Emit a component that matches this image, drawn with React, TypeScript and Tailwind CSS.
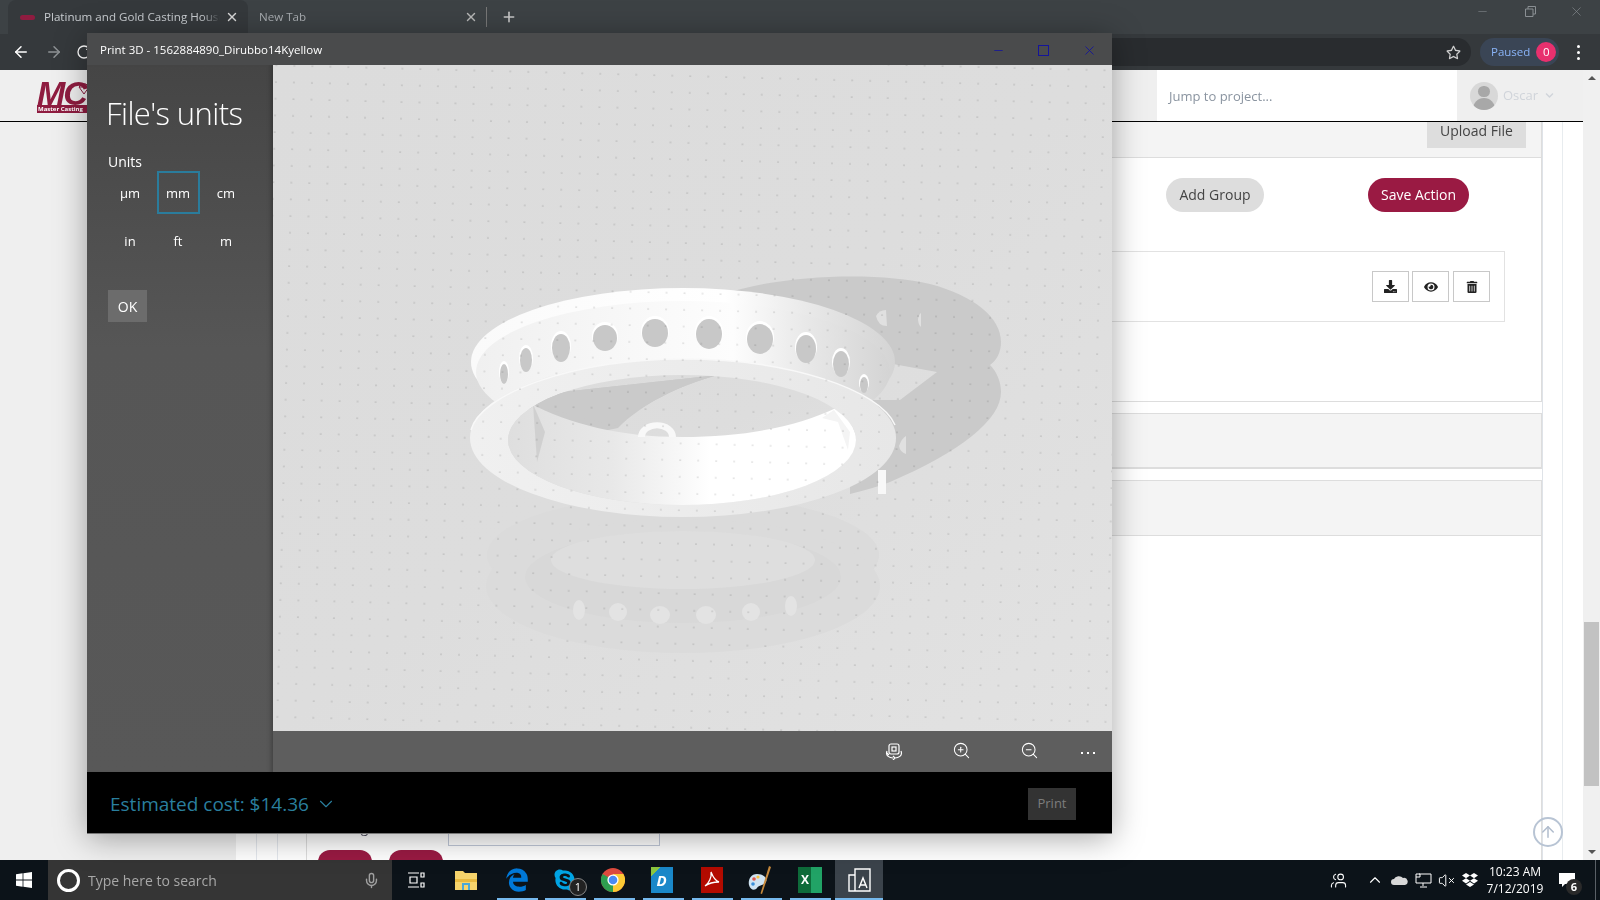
import { FaDownload, FaEye, FaTrashAlt, FaRegStar, FaSkype, FaChevronDown } from "react-icons/fa";
import { FaEdgeLegacy } from "react-icons/fa6";
import { X, Plus, ArrowLeft, ArrowRight, RotateCw, ChevronDown, ZoomIn, ZoomOut, ArrowUp, Mic, ChevronUp, VolumeX, Users, Minus } from "lucide-react";

const units = ["µm", "mm", "cm", "in", "ft", "m"];

const holes = [
  [504, 373, 4, 10],
  [526, 359, 6, 12],
  [561, 347, 9, 14],
  [605, 337, 12, 13],
  [655, 332, 13, 14],
  [709, 333, 13, 15],
  [760, 338, 13, 15],
  [806, 348, 10, 14],
  [841, 363, 8, 13],
  [864, 384, 4, 8],
];

const reflectionHoles = [
  [579, 610, 6, 10],
  [618, 612, 9, 9],
  [660, 615, 10, 9],
  [706, 615, 10, 9],
  [751, 612, 9, 9],
  [791, 606, 6, 10],
];

const trayIcons = [497, 545, 594, 643, 692, 741, 790];

const RingScene = () => (
  <svg viewBox="273 65 839 666" className="block w-[839px] h-[666px]">
    <defs>
      <pattern id="dots" width="18" height="16.7" patternUnits="userSpaceOnUse" patternTransform="rotate(1.5)">
        <circle cx="8" cy="8" r="0.8" fill="#bdbdbd" />
      </pattern>
      <linearGradient id="floor" x1="0" y1="0" x2="1" y2="1">
        <stop offset="0" stopColor="#dcdcdc" />
        <stop offset="0.5" stopColor="#dddddd" />
        <stop offset="1" stopColor="#e2e2e2" />
      </linearGradient>
      <linearGradient id="band" x1="0" y1="0" x2="1" y2="0">
        <stop offset="0" stopColor="#fafafa" />
        <stop offset="0.6" stopColor="#ffffff" />
        <stop offset="0.82" stopColor="#e6e6e6" />
        <stop offset="1" stopColor="#d4d4d4" />
      </linearGradient>
      <linearGradient id="inner" x1="0" y1="0" x2="1" y2="0">
        <stop offset="0" stopColor="#f0f0f0" />
        <stop offset="0.62" stopColor="#fdfdfd" />
        <stop offset="0.8" stopColor="#e8e8e8" />
        <stop offset="1" stopColor="#d4d4d4" />
      </linearGradient>
      <linearGradient id="face" x1="0" y1="0" x2="1" y2="0">
        <stop offset="0" stopColor="#f0f0f0" />
        <stop offset="0.5" stopColor="#ececec" />
        <stop offset="1" stopColor="#e7e7e7" />
      </linearGradient>
      <linearGradient id="wall" x1="0" y1="0" x2="1" y2="0">
        <stop offset="0" stopColor="#dedede" />
        <stop offset="0.3" stopColor="#e8e8e8" />
        <stop offset="0.5" stopColor="#f8f8f8" />
        <stop offset="0.58" stopColor="#ffffff" />
        <stop offset="1" stopColor="#ffffff" />
      </linearGradient>
      <clipPath id="hole">
        <ellipse cx="682" cy="440" rx="174" ry="65" />
      </clipPath>
    </defs>

    <rect x="273" y="65" width="839" height="666" fill="url(#floor)" />

    {/* reflection */}
    <ellipse cx="683" cy="555" rx="196" ry="60" fill="#dbdbdb" />
    <ellipse cx="683" cy="586" rx="197" ry="67" fill="#dbdbdb" />
    <ellipse cx="683" cy="577" rx="158" ry="46" fill="#d8d8d8" />
    <ellipse cx="683" cy="560" rx="132" ry="29" fill="#dedede" />
    {reflectionHoles.map(([x, y, rx, ry]) => (
      <ellipse key={x} cx={x} cy={y} rx={rx} ry={ry} fill="#e3e3e3" />
    ))}

    {/* cast shadow */}
    <path
      d="M730 292 C790 274 880 272 930 284 C975 296 1001 318 1001 342 C1001 352 997 360 990 365 C997 372 1001 382 1001 392 C1001 420 960 452 890 482 C880 486 866 490 850 494 L850 400 L900 400 L937 372 L860 358 Z"
      fill="#cacaca"
    />
    <path d="M876 316 q3 -6 10 -6 l1 16 q-9 0 -11 -10z" fill="#e0e0e0" />
    <path d="M918 319 q1 -5 3 -6 l0 14 q-3 -3 -3 -8z" fill="#e0e0e0" />
    <path d="M899 446 q3 -8 7 -10 l0 18 q-6 -2 -7 -8z" fill="#e0e0e0" />
    <rect x="878" y="470" width="8" height="24" fill="#f8f8f8" />

    {/* top band */}
    <ellipse cx="683" cy="362" rx="212" ry="74" fill="url(#band)" />
    <ellipse cx="683" cy="372" rx="207" ry="71" fill="url(#inner)" />
    {holes.map(([x, y, rx, ry]) => (
      <g key={x}>
        <ellipse cx={x} cy={y - 1} rx={rx + 1} ry={ry + 1} fill="#ffffff" />
        <ellipse cx={x} cy={y + 1} rx={rx} ry={ry} fill="#c8c8c8" />
      </g>
    ))}

    {/* front face */}
    <ellipse cx="683" cy="438" rx="213" ry="79" fill="url(#face)" />
    <path d="M471 430 C480 395 570 359 683 359 C790 359 880 390 895 425" fill="none" stroke="#f8f8f8" strokeWidth="1.5" />
    <ellipse cx="682" cy="440" rx="174" ry="65" fill="url(#floor)" />
    <g clipPath="url(#hole)">
      <path d="M529 403 L553 393 L718 375 C680 385 640 405 618 428 L560 440 L530 450 Z" fill="#cacaca" />
      <path
        d="M505 440 C510 420 520 408 529 403 C570 424 620 437 682 437 C750 437 800 425 836 408 C848 415 856 430 858 445 C858 480 780 510 682 510 C590 510 505 480 505 440 Z"
        fill="url(#wall)"
      />
      <path d="M529 403 L553 393 L718 375 C680 385 640 405 618 426 C585 418 555 412 529 403 Z" fill="#cacaca" />
      <path d="M533 404 L545 432 L537 462 Z" fill="#d0d0d0" />
      <path d="M638 437 a18 14 0 0 1 38 0 l-7 0 a11 8 0 0 0 -24 0 z" fill="#f8f8f8" />
      <path d="M822 418 L834 410 L850 432 L848 450 L838 422 Z" fill="#f4f4f4" />
    </g>

    <rect x="273" y="65" width="839" height="666" fill="url(#dots)" opacity="0.6" style={{ mixBlendMode: "multiply" }} />
  </svg>
);

const Cube3D = () => (
  <svg width="18" height="18" viewBox="0 0 18 18" fill="none" stroke="#fff" strokeWidth="1.2">
    <rect x="4" y="2" width="10" height="10" rx="2" />
    <rect x="7" y="5" width="4" height="4" />
    <path d="M2 9 C0 14 5 16 8 16 M16 9 C18 14 13 16 10 16 M8 14 l2 2 -2 2 M4 13 l-2 -2" />
  </svg>
);

const Taskbar = () => (
  <div className="flex items-center h-10 bg-[#0c1319] shrink-0 relative text-white">
    <div className="w-12 flex justify-center">
      <svg width="16" height="16" viewBox="0 0 16 16" fill="#fff">
        <path d="M0 2.3 L6.6 1.3 V7.6 H0Z M7.4 1.2 L16 0 V7.6 H7.4Z M0 8.4 H6.6 V14.7 L0 13.7Z M7.4 8.4 H16 V16 L7.4 14.8Z" />
      </svg>
    </div>
    <div className="flex items-center w-[344px] h-10 bg-[#353535] text-[#a8a8a8] text-[14px]">
      <span className="ml-[9px] w-[23px] h-[23px] rounded-full border-[3px] border-white" />
      <span className="ml-[8px] flex-1">Type here to search</span>
      <Mic size={17} className="mr-[12px] text-[#a0a0a0]" />
    </div>
    <div className="w-12 flex justify-center">
      <svg width="18" height="16" viewBox="0 0 18 16" fill="none" stroke="#fff" strokeWidth="1.2">
        <path d="M1 1 H12 M1 15 H12 M3 5 H10 V11 H3Z M14 1 H17 V5 H14Z M14 11 H17 V15 H14Z" />
      </svg>
    </div>
    <div className="ml-[1px] w-[50px] flex justify-center">
      <svg width="22" height="20" viewBox="0 0 22 20">
        <path d="M0 1 H8 L10 3 H22 V20 H0Z" fill="#f6d36b" />
        <rect x="0" y="9" width="22" height="3" fill="#e8b93f" />
        <path d="M7 20 V13 H15 V20 H13 V15 H9 V20Z" fill="#4aa8d8" />
      </svg>
    </div>
    <div className="w-[51px] flex justify-center text-[#0078d7]">
      <FaEdgeLegacy size={24} />
    </div>
    <div className="w-[45px] flex justify-center text-[#00a4e4] relative">
      <FaSkype size={24} />
      <span className="absolute left-[27px] top-[10px] w-[18px] h-[18px] rounded-full bg-[#222] border border-[#888] text-[11px] leading-[16px] text-center text-white">1</span>
    </div>
    <div className="w-[51px] flex justify-center">
      <svg width="24" height="24" viewBox="0 0 24 24">
        <circle cx="12" cy="12" r="12" fill="#dd4b3e" />
        <path d="M12 12 L1.6 6 A12 12 0 0 0 12 24 Z" fill="#2e9e4f" />
        <path d="M12 12 L12 24 A12 12 0 0 0 22.4 6 L12 6Z" fill="#fcc934" />
        <circle cx="12" cy="12" r="5.6" fill="#fff" />
        <circle cx="12" cy="12" r="4.3" fill="#4a8af4" />
      </svg>
    </div>
    <div className="w-[47px] flex justify-center">
      <div className="w-[22px] h-[26px] bg-[linear-gradient(135deg,#8cc63f_20%,#1a88c9_20%)] flex items-center justify-center text-white text-[15px] font-bold italic">D</div>
    </div>
    <div className="w-[53px] flex justify-center">
      <svg width="22" height="26" viewBox="0 0 22 26">
        <rect width="22" height="26" fill="#b30b00" />
        <path d="M4 19 C8 16 11 10 10 5 C12 10 14 14 18 15 C13 15 8 16 4 19Z" fill="none" stroke="#fff" strokeWidth="1.3" />
      </svg>
    </div>
    <div className="w-[43px] flex justify-center">
      <svg width="26" height="30" viewBox="0 0 26 30">
        <path d="M10 9 C3 9 1 16 2 20 C3 25 8 26 10 23 C12 20 14 21 17 19 C22 16 19 9 10 9Z" fill="#cfe3f2" />
        <circle cx="7" cy="14" r="1.8" fill="#e2574c" />
        <circle cx="6" cy="19" r="1.8" fill="#3a8fd9" />
        <circle cx="11" cy="12" r="1.6" fill="#f6c544" />
        <path d="M22 1 L24 2 L15 29 L13.5 28.5 Z" fill="#c98a3c" />
      </svg>
    </div>
    <div className="w-[54px] flex justify-center pl-[4px]">
      <div className="w-[24px] h-[26px] bg-[linear-gradient(90deg,#0e6b3a_55%,#21a366_55%)] text-white text-[12px] font-bold flex items-center pl-[3px]">X</div>
    </div>
    <div className="w-12 h-10 bg-[#3b434b] flex justify-center items-center">
      <svg width="24" height="26" viewBox="0 0 24 26" fill="none" stroke="#fff" strokeWidth="1.4">
        <path d="M8 8 V2 H23 V24 H2 V8 H8 V24" />
        <path d="M12 21 L16 11 L20 21 M13.5 18 H18.5" />
      </svg>
    </div>

    {trayIcons.map((x) => (
      <span key={x} style={{ left: x }} className="absolute bottom-0 w-[41px] h-[2px] bg-[#76b9ed]" />
    ))}
    <span className="absolute bottom-0 left-[835px] w-12 h-[2px] bg-[#76b9ed]" />

    <div className="flex items-center ml-auto">
      <Users size={17} strokeWidth={1.5} className="mr-[19px] -scale-x-100" />
      <ChevronUp size={18} strokeWidth={1.5} className="mr-[7px]" />
      <svg width="17" height="10" viewBox="0 0 17 10" fill="#d8d8d8" className="mr-[7px]">
        <path d="M3 10 A3 3 0 0 1 3 4 A5 4 0 0 1 12 3 A3.5 3.5 0 0 1 14 10Z" />
      </svg>
      <svg width="17" height="15" viewBox="0 0 17 15" fill="none" stroke="#fff" className="mr-[6px]">
        <path d="M4 1 H16 V10 H1 V4 M8 10 V13 M5 14 H12 M1 1 H5 V4 H1Z" />
      </svg>
      <VolumeX size={17} strokeWidth={1.4} className="mr-[7px]" />
      <svg width="16" height="15" viewBox="0 0 16 15" fill="#fff" className="mr-[4px]">
        <path d="M4 0 L8 2.6 L4 5.2 L0 2.6Z M12 0 L16 2.6 L12 5.2 L8 2.6Z M4 5.2 L8 7.8 L4 10.4 L0 7.8Z M12 5.2 L16 7.8 L12 10.4 L8 7.8Z M4 11.4 L8 9 L12 11.4 L8 14Z" />
      </svg>
      <div className="w-[66px] text-center text-[12px] leading-[17px] whitespace-nowrap">
        <div>10:23 AM</div>
        <div>7/12/2019</div>
      </div>
      <div className="relative ml-[11px] mr-[25px]">
        <svg width="16" height="15" viewBox="0 0 16 15" fill="#fff">
          <path d="M0 0 H16 V11 H6 L3 14 V11 H0Z" />
        </svg>
        <span className="absolute left-[7px] top-[6px] w-[16px] h-[16px] rounded-full bg-[#2a2a2a] text-[11px] font-bold leading-[16px] text-center">6</span>
      </div>
      <span className="absolute right-[4px] top-0 h-10 w-px bg-[#5a6066]" />
    </div>
  </div>
);

const Window3D = () => (
  <div className="absolute left-[87px] top-[33px] w-[1025px] h-[801px] flex flex-col shadow-[0_4px_30px_rgba(0,0,0,0.35)] text-white border-b border-[#777]">
    <div className="flex items-center h-8 shrink-0 bg-[#4a4b4c] pl-[13px] pt-[2px] text-[11.5px]">
      <span className="flex-1">Print 3D - 1562884890_Dirubbo14Kyellow</span>
      <Minus size={13} strokeWidth={1.5} className="text-[#15159a] mr-[33px]" />
      <span className="w-[11px] h-[11px] border border-[#15159a] mr-[33px]" />
      <X size={15} strokeWidth={1.4} className="text-[#15159a] mr-[15px]" />
    </div>
    <div className="flex flex-1 min-h-0">
      <div className="w-[186px] shrink-0 bg-[linear-gradient(180deg,#454545,#565656_40%,#585858)] pl-[19px] pr-[5px] shadow-[inset_-5px_0_4px_-3px_rgba(0,0,0,0.25)]">
        <h1 className="mt-[28px] text-[31px] leading-[40px] font-light tracking-[-0.6px] whitespace-nowrap">File's units</h1>
        <div className="mt-[20px] pl-[2px] text-[14px] leading-[18px]">Units</div>
        <div className="mt-[-1px] grid grid-cols-[48px_48px_48px] auto-rows-[48px]">
          {units.map((u) => (
            <div key={u} className="flex items-center justify-center text-[13px]">
              <span className={u === "mm" ? "w-[43px] h-[43px] mb-[4px] pt-[4px] border-2 border-[#2a7c9c] flex items-center justify-center" : ""}>{u}</span>
            </div>
          ))}
        </div>
        <button className="mt-[24px] ml-[2px] w-[39px] h-[32px] bg-[#6c6c6c] text-[14px]">OK</button>
      </div>
      <div className="flex-1 flex flex-col min-w-0">
        <RingScene />
        <div className="flex items-center flex-1 bg-[#5e5e5e] pl-[612px] pb-[2px]">
          <Cube3D />
          <ZoomIn size={19} strokeWidth={1.3} className="ml-[49px]" />
          <ZoomOut size={19} strokeWidth={1.3} className="ml-[49px]" />
          <span className="ml-[42px] mt-[4px] flex gap-[4px]">
            <i className="w-[2px] h-[2px] bg-white" />
            <i className="w-[2px] h-[2px] bg-white" />
            <i className="w-[2px] h-[2px] bg-white" />
          </span>
        </div>
      </div>
    </div>
    <div className="flex items-center h-[61px] shrink-0 bg-black pl-[23px] pr-[36px] pt-[3px]">
      <span className="text-[19px] text-[#2a7f9e]">Estimated cost: $14.36</span>
      <ChevronDown size={22} strokeWidth={1.2} className="ml-[6px] text-[#2a7f9e]" />
      <button className="ml-auto w-[48px] h-[32px] bg-[#333333] text-[#7d7d7d] text-[13px]">Print</button>
    </div>
  </div>
);

const App = () => (
  <div className="relative w-[1600px] h-[900px] overflow-hidden flex flex-col bg-white font-['Open_Sans',sans-serif]">
    {/* browser tabs */}
    <div className="flex items-end h-[34px] bg-[#3d4245] shrink-0 text-[11.6px]">
      <div className="ml-[8px] w-[240px] h-[34px] rounded-t-lg bg-[#35393c] flex items-center pl-[12px] text-[#c8ccd0]">
        <span className="w-[15px] h-[5px] bg-[#8f1c40] rounded-sm" />
        <span className="ml-[9px] w-[176px] overflow-hidden whitespace-nowrap [mask-image:linear-gradient(90deg,#000_90%,transparent)]">Platinum and Gold Casting House</span>
        <X size={14} className="ml-[5px] text-[#d8d8d8]" strokeWidth={2.4} />
      </div>
      <div className="h-[34px] w-[238px] flex items-center pl-[11px] text-[#a8acb0]">
        <span className="flex-1">New Tab</span>
        <X size={14} className="mr-[8px] text-[#b8b8b8]" strokeWidth={2.4} />
      </div>
      <span className="h-[20px] w-px bg-[#777] mb-[7px]" />
      <Plus size={16} className="ml-[14px] mb-[9px] text-[#c8c8c8]" strokeWidth={2.4} />
      <div className="ml-auto flex items-center h-[34px] mb-[6px] text-[#8a8f93]">
        <Minus size={13} strokeWidth={1} className="mr-[36px]" />
        <svg width="11" height="11" viewBox="0 0 11 11" fill="none" stroke="#8a8f93" className="mr-[33px]">
          <path d="M0.5 3 H8 V10.5 H0.5Z M3 3 V0.5 H10.5 V8 H8" />
        </svg>
        <X size={15} strokeWidth={1} className="mr-[16px]" />
      </div>
    </div>
    {/* browser toolbar */}
    <div className="flex items-center h-[36px] bg-[#35393c] shrink-0">
      <ArrowLeft size={18} className="ml-[12px] text-white" />
      <ArrowRight size={18} className="ml-[15px] text-[#8e9295]" />
      <RotateCw size={16} className="ml-[13px] text-white" />
      <div className="ml-[6px] flex-1 h-[28px] rounded-full bg-[#292c2f] flex items-center justify-end pr-[10px]">
        <FaRegStar size={15} className="text-[#d0d0d0]" />
      </div>
      <div className="ml-[9px] w-[79px] h-[28px] rounded-full bg-[#3a4555] flex items-center pl-[11px] text-[11.5px] text-[#8ab4f8]">
        Paused
        <span className="ml-[6px] w-[20px] h-[20px] rounded-full bg-[#e8306e] text-white text-center leading-[20px]">0</span>
      </div>
      <span className="ml-[18px] mr-[20px] flex flex-col gap-[3px]">
        <i className="w-[3px] h-[3px] rounded-full bg-white" />
        <i className="w-[3px] h-[3px] rounded-full bg-white" />
        <i className="w-[3px] h-[3px] rounded-full bg-white" />
      </span>
    </div>

    {/* page behind the dialog */}
    <div className="flex flex-1 min-h-0">
      <div className="flex-1 flex flex-col min-w-0">
        <div className="flex h-[52px] shrink-0 bg-[#efefef] border-b border-black">
          <div className="ml-[37px] mt-[11px] w-[100px] h-[32px] relative">
            <div className="text-[#8f1c40] font-['Liberation_Sans',sans-serif] font-bold italic text-[34px] leading-[24px] tracking-[-2px]">MC</div>
            <svg width="12" height="12" viewBox="0 0 12 12" fill="none" stroke="#8f1c40" className="absolute left-[41px] top-[2px]">
              <path d="M1 4 L4 1 H8 L11 4 L6 11Z M1 4 H11" />
            </svg>
            <div className="w-[60px] bg-[#8f1c40] text-white text-[6px] leading-[8px] font-bold whitespace-nowrap pl-[1px]">Master Casting</div>
          </div>
          <div className="ml-[1020px] w-[300px] bg-white flex items-center pl-[12px] pt-[2px] text-[13px] text-[#8a94a0]">Jump to project...</div>
          <div className="flex-1 flex items-center text-[#d0d4da] text-[13px] pl-[13px]">
            <span className="w-[28px] h-[28px] rounded-full bg-[#d8d8d8] overflow-hidden flex flex-col items-center">
              <i className="mt-[4px] w-[12px] h-[12px] rounded-full bg-[#a8a8a8]" />
              <i className="mt-[1px] w-[22px] h-[12px] rounded-t-full bg-[#a8a8a8]" />
            </span>
            <span className="ml-[5px]">Oscar</span>
            <FaChevronDown size={9} className="ml-[7px]" />
          </div>
        </div>
        <div className="flex flex-1 min-h-0">
          <div className="w-[236px] shrink-0 bg-[#efefef]" />
          <div className="flex-1 flex min-w-0 relative bg-white">
            <div className="w-[21px] border-r border-[#e4e8ee]" />
            <div className="w-[21px] border-r border-[#e4e8ee]" />
            <div className="flex-1 min-w-0 border-r border-[#dfe3e8] pl-[28px] flex flex-col">
              <div className="h-[36px] bg-[#f4f4f4] border-b border-[#dddddd] border-x flex justify-end pr-[15px] shrink-0">
                <button className="w-[99px] h-[26px] bg-[#dddddd] text-[14px] leading-[14px] pb-[9px] text-[#444]">Upload File</button>
              </div>
              <div className="h-[244px] border-x border-b border-[#dddddd] shrink-0">
                <div className="flex mt-[20px] justify-end pr-[72px]">
                  <button className="w-[98px] h-[34px] rounded-full bg-[#dddddd] text-[14px] pb-[1px] text-[#444]">Add Group</button>
                  <button className="ml-[104px] w-[101px] h-[34px] rounded-full bg-[#9a1a43] text-[14px] pb-[1px] text-white">Save Action</button>
                </div>
                <div className="mt-[39px] mr-[36px] h-[71px] border border-[#e2e2e2] flex items-center justify-end pr-[14px] gap-[3px] text-[#222]">
                  <button className="w-[37px] h-[31px] border border-[#c8c8c8] flex items-center justify-center"><FaDownload size={13} /></button>
                  <button className="w-[37px] h-[31px] border border-[#c8c8c8] flex items-center justify-center"><FaEye size={14} /></button>
                  <button className="w-[37px] h-[31px] border border-[#c8c8c8] flex items-center justify-center ml-[1px]"><FaTrashAlt size={12} /></button>
                </div>
              </div>
              <div className="mt-[11px] h-[56px] bg-[#f4f4f4] border border-b-2 border-[#dddddd] shrink-0" />
              <div className="mt-[11px] h-[56px] bg-[#f4f4f4] border border-[#dddddd] shrink-0" />
              <div className="flex-1 border-x border-[#dddddd] relative">
                <div className="absolute left-[10px] bottom-[22px] text-[13px] text-[#445]">Tracking #</div>
                <div className="absolute left-[141px] bottom-[14px] w-[212px] h-[22px] border border-[#c0c8d8]" />
                <div className="absolute left-[11px] bottom-[-14px] flex gap-[17px]">
                  <span className="w-[54px] h-[24px] rounded-full bg-[#9a1a43]" />
                  <span className="w-[54px] h-[24px] rounded-full bg-[#9a1a43]" />
                </div>
              </div>
            </div>
            <div className="w-[20px] border-r border-[#e8ecef]" />
            <div className="w-[20px]" />
            <div className="absolute right-[20px] bottom-[13px] w-[30px] h-[30px] rounded-full border-2 border-[#b8c4d4] flex items-center justify-center text-[#b0bccd]">
              <ArrowUp size={18} />
            </div>
          </div>
        </div>
      </div>
      {/* scrollbar */}
      <div className="w-[17px] bg-[#f0f0f0] shrink-0 flex flex-col items-center relative">
        <span className="mt-[6px] w-0 h-0 border-x-[4px] border-x-transparent border-b-[4px] border-b-[#555]" />
        <span className="mt-[542px] w-[15px] h-[164px] bg-[#c2c2c2]" />
        <span className="mt-auto mb-[6px] w-0 h-0 border-x-[4px] border-x-transparent border-t-[4px] border-t-[#555]" />
      </div>
    </div>

    <Taskbar />
    <Window3D />
  </div>
);

export default App;
